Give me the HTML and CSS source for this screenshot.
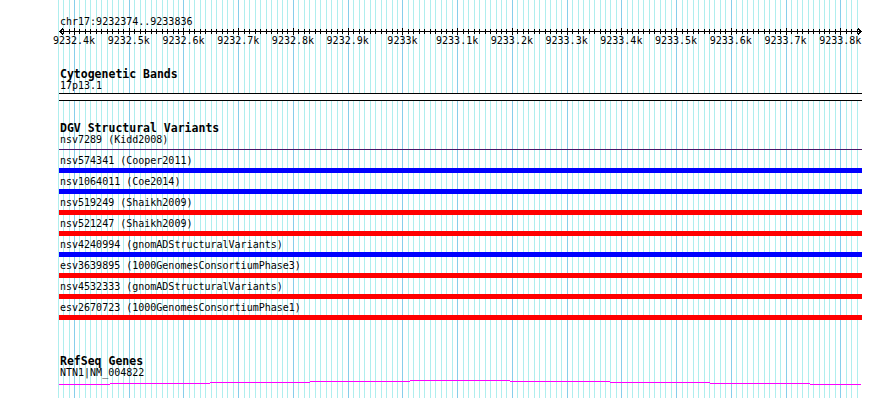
FILE: index.html
```html
<!DOCTYPE html>
<html lang="en">
<head>
<meta charset="utf-8">
<title>Genome browser – chr17:9232374..9233836</title>
<link rel="stylesheet" href="styles.css">
</head>
<body>
<main class="browser">
  <svg class="grid" width="890" height="398" aria-hidden="true">
    <path class="grid-minor" d=""/>
    <path class="grid-major" d=""/>
  </svg>

  <header class="ruler">
    <div class="locus">chr17:9232374..9233836</div>
    <svg class="scale" width="803" height="7" aria-hidden="true">
      <path class="axis" d="M1 3.5H802M4 0.5L1 3.5L4 6.5M799 0.5L802 3.5L799 6.5"/>
      <path class="ticks" d=""/>
    </svg>
    <div class="scale-labels">
      <span>9232.4k</span><span>9232.5k</span><span>9232.6k</span><span>9232.7k</span><span>9232.8k</span><span>9232.9k</span><span>9233k</span><span>9233.1k</span><span>9233.2k</span><span>9233.3k</span><span>9233.4k</span><span>9233.5k</span><span>9233.6k</span><span>9233.7k</span><span>9233.8k</span>
    </div>
  </header>

  <section class="track">
    <h2 class="track-title">Cytogenetic Bands</h2>
    <div class="label">17p13.1</div>
    <div class="band"></div>
  </section>

  <section class="track">
    <h2 class="track-title">DGV Structural Variants</h2>
    <div class="feature">
      <div class="label">nsv7289 (Kidd2008)</div>
      <div class="bar bar-thin"></div>
    </div>
    <div class="feature">
      <div class="label">nsv574341 (Cooper2011)</div>
      <div class="bar bar-loss"></div>
    </div>
    <div class="feature">
      <div class="label">nsv1064011 (Coe2014)</div>
      <div class="bar bar-loss"></div>
    </div>
    <div class="feature">
      <div class="label">nsv519249 (Shaikh2009)</div>
      <div class="bar bar-gain"></div>
    </div>
    <div class="feature">
      <div class="label">nsv521247 (Shaikh2009)</div>
      <div class="bar bar-gain"></div>
    </div>
    <div class="feature">
      <div class="label">nsv4240994 (gnomADStructuralVariants)</div>
      <div class="bar bar-loss"></div>
    </div>
    <div class="feature">
      <div class="label">esv3639895 (1000GenomesConsortiumPhase3)</div>
      <div class="bar bar-gain"></div>
    </div>
    <div class="feature">
      <div class="label">nsv4532333 (gnomADStructuralVariants)</div>
      <div class="bar bar-gain"></div>
    </div>
    <div class="feature">
      <div class="label">esv2670723 (1000GenomesConsortiumPhase1)</div>
      <div class="bar bar-gain"></div>
    </div>
  </section>

  <section class="track track-genes">
    <h2 class="track-title">RefSeq Genes</h2>
    <div class="label">NTN1|NM_004822</div>
    <svg class="gene" width="803" height="7" aria-hidden="true">
      <path d="M0 5.5H51M51 4.5H151M151 3.5H251M251 2.5H351M351 1.5H451M451 2.5H551M551 3.5H651M651 4.5H751M751 5.5H802"/>
    </svg>
  </section>
</main>
<script src="script.js"></script>
</body>
</html>
```

FILE: styles.css
```css
html {
  background: #fff;
}

body {
  margin: 0;
  font-family: "DejaVu Sans Mono", "Liberation Mono", monospace;
  font-size: 10px;
  line-height: 12px;
  color: #000;
  overflow: hidden;
}

.browser {
  position: relative;
  display: block;
  width: 890px;
  height: 398px;
  box-sizing: border-box;
  padding: 16px 0 0 59px;
}

.grid {
  position: absolute;
  left: 0;
  top: 0;
  z-index: -1;
}

.grid path {
  fill: none;
  stroke-width: 1;
  shape-rendering: crispEdges;
}

.grid-minor {
  stroke: #afeeee;
}

.grid-major {
  stroke: #87ceeb;
}

.locus {
  height: 12px;
  padding-left: 1px;
  white-space: nowrap;
}

.scale {
  display: block;
}

.scale path {
  fill: none;
  stroke: #000;
  stroke-width: 1;
  shape-rendering: crispEdges;
}

.scale-labels {
  display: flex;
  margin-left: -12.37px;
  height: 12px;
  white-space: nowrap;
}

.scale-labels span {
  flex: 0 0 54.743px;
  text-align: center;
}

.track-title {
  margin: 21px 0 0;
  padding-left: 1px;
  font-size: 11.5px;
  font-weight: bold;
  line-height: 12px;
  white-space: nowrap;
}

.track-genes .track-title {
  margin-top: 35px;
}

.label {
  height: 12px;
  padding-left: 1px;
  white-space: nowrap;
}

.band {
  width: 803px;
  height: 6px;
  margin-top: 1px;
  background: #fff;
  border-top: 1px solid #000;
  border-bottom: 1px solid #000;
}

.bar {
  width: 803px;
  height: 5px;
  margin: 1px 0 3px;
}

.bar-loss {
  background: #0000ff;
}

.bar-gain {
  background: #ff0000;
}

.bar-thin {
  height: 1px;
  margin: 3px 0 5px;
  background: #4a1468;
}

.gene {
  display: block;
}

.gene path {
  fill: none;
  stroke: #ff00ff;
  stroke-width: 1;
  shape-rendering: crispEdges;
}
```

FILE: script.js
```js
(function () {
  var REF_BP = 9232400;
  var REF_X = 74;
  var PX_PER_BP = 0.54743;
  var TRACK_LEFT = 59;
  var VIEW_START = 9232374;

  function toX(bp) {
    return Math.round(REF_X + (bp - REF_BP) * PX_PER_BP);
  }

  var minor = '';
  var major = '';
  var ticks = '';

  for (var bp = 9232370; bp <= 9233830; bp += 10) {
    var x = toX(bp) + 0.5;
    var isMajor = bp % 100 === 0;
    if (isMajor) {
      major += 'M' + x + ' 0V398';
    } else {
      minor += 'M' + x + ' 0V398';
    }
    if (bp > VIEW_START) {
      var t = x - TRACK_LEFT;
      ticks += isMajor ? 'M' + t + ' 0V7' : 'M' + t + ' 1V6';
    }
  }

  document.querySelector('.grid-minor').setAttribute('d', minor);
  document.querySelector('.grid-major').setAttribute('d', major);
  document.querySelector('.scale .ticks').setAttribute('d', ticks);
})();
```
